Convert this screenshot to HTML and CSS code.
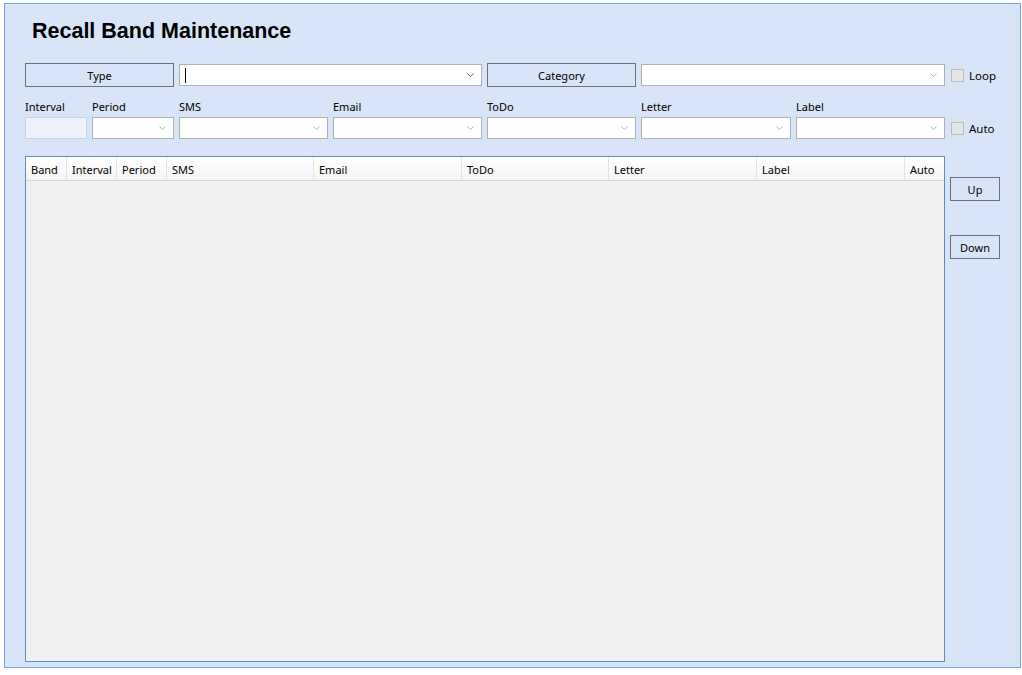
FILE: index.html
```html
<!DOCTYPE html>
<html lang="en">
<head>
    <meta charset="UTF-8">
    <title>Recall Band Maintenance</title>
    <link rel="stylesheet" href="styles.css">
</head>
<body>
    <div class="window">
        <h1 class="title">Recall Band Maintenance</h1>

        <div class="form-grid">
            <button class="btn span-2">Type</button>
            <div class="combo span-2 active">
                <span class="caret"></span>
                <svg class="chev" width="7" height="5" viewBox="0 0 7 5"><polyline points="0.5,0.5 3.5,3.5 6.5,0.5" fill="none" stroke="currentColor"/></svg>
            </div>
            <button class="btn">Category</button>
            <div class="combo span-2">
                <svg class="chev" width="7" height="5" viewBox="0 0 7 5"><polyline points="0.5,0.5 3.5,3.5 6.5,0.5" fill="none" stroke="currentColor"/></svg>
            </div>
            <label class="check"><span class="box"></span>Loop</label>

            <div class="field">
                <span class="lbl">Interval</span>
                <div class="textbox"></div>
            </div>
            <div class="field">
                <span class="lbl">Period</span>
                <div class="combo"><svg class="chev" width="7" height="5" viewBox="0 0 7 5"><polyline points="0.5,0.5 3.5,3.5 6.5,0.5" fill="none" stroke="currentColor"/></svg></div>
            </div>
            <div class="field">
                <span class="lbl">SMS</span>
                <div class="combo"><svg class="chev" width="7" height="5" viewBox="0 0 7 5"><polyline points="0.5,0.5 3.5,3.5 6.5,0.5" fill="none" stroke="currentColor"/></svg></div>
            </div>
            <div class="field">
                <span class="lbl">Email</span>
                <div class="combo"><svg class="chev" width="7" height="5" viewBox="0 0 7 5"><polyline points="0.5,0.5 3.5,3.5 6.5,0.5" fill="none" stroke="currentColor"/></svg></div>
            </div>
            <div class="field">
                <span class="lbl">ToDo</span>
                <div class="combo"><svg class="chev" width="7" height="5" viewBox="0 0 7 5"><polyline points="0.5,0.5 3.5,3.5 6.5,0.5" fill="none" stroke="currentColor"/></svg></div>
            </div>
            <div class="field">
                <span class="lbl">Letter</span>
                <div class="combo"><svg class="chev" width="7" height="5" viewBox="0 0 7 5"><polyline points="0.5,0.5 3.5,3.5 6.5,0.5" fill="none" stroke="currentColor"/></svg></div>
            </div>
            <div class="field">
                <span class="lbl">Label</span>
                <div class="combo"><svg class="chev" width="7" height="5" viewBox="0 0 7 5"><polyline points="0.5,0.5 3.5,3.5 6.5,0.5" fill="none" stroke="currentColor"/></svg></div>
            </div>
            <label class="check check-bottom"><span class="box"></span>Auto</label>
        </div>

        <div class="main">
            <div class="grid-view">
                <div class="grid-header">
                    <div class="col" style="width:41px">Band</div>
                    <div class="col" style="width:50px">Interval</div>
                    <div class="col" style="width:50px">Period</div>
                    <div class="col" style="width:147px">SMS</div>
                    <div class="col" style="width:148px">Email</div>
                    <div class="col" style="width:147px">ToDo</div>
                    <div class="col" style="width:148px">Letter</div>
                    <div class="col" style="width:148px">Label</div>
                    <div class="col last">Auto</div>
                </div>
                <div class="grid-body"></div>
            </div>
            <div class="side">
                <button class="btn small">Up</button>
                <button class="btn small down">Down</button>
            </div>
        </div>
    </div>
</body>
</html>
```

FILE: styles.css
```css
body {
    margin: 0;
    background-color: #ffffff;
    font-family: "Noto Sans", "Liberation Sans", sans-serif;
    font-size: 11px;
    color: #000;
}
.window {
    box-sizing: border-box;
    width: 1017px;
    height: 665px;
    margin: 3px 0 0 4px;
    padding: 15px 0 5px 20px;
    background-color: #d8e4f7;
    border: 1px solid #7aa3e2;
    display: flex;
    flex-direction: column;
}
.title {
    margin: 0 0 0 7px;
    font-family: "Liberation Sans", Arial, sans-serif;
    font-size: 21.5px;
    font-weight: bold;
    line-height: 25px;
    height: 25px;
}
.form-grid {
    display: grid;
    grid-template-columns: 62px 82px 149px 149px 149px 150px 149px auto;
    grid-template-rows: 24px auto;
    column-gap: 5px;
    row-gap: 12px;
    margin-top: 19px;
}
.span-2 { grid-column: span 2; }
.btn {
    box-sizing: border-box;
    height: 24px;
    padding: 0;
    background-color: #d8e4f7;
    border: 1px solid #707070;
    font-family: inherit;
    font-size: 11px;
    color: #000;
}
.combo {
    position: relative;
    box-sizing: border-box;
    height: 22px;
    align-self: center;
    background-color: #fff;
    border: 1px solid #b0b0b0;
    color: #b5b5b5;
}
.field .combo { align-self: stretch; }
.combo.active { color: #606060; }
.combo .chev {
    position: absolute;
    right: 7px;
    top: 8px;
}
.caret {
    position: absolute;
    left: 5px;
    top: 3px;
    height: 15px;
    border-left: 1px solid #000;
}
.check {
    display: flex;
    align-items: center;
    margin-left: 1px;
    gap: 5px;
    font-size: 11.5px;
}
.check-bottom {
    align-self: end;
    height: 21px;
}
.box {
    box-sizing: border-box;
    width: 13px;
    height: 13px;
    background-color: #e6e6e6;
    border: 1px solid #bcbcbc;
}
.field {
    display: flex;
    flex-direction: column;
}
.lbl {
    line-height: 16px;
    margin-bottom: 2px;
    font-size: 11px;
}
.textbox {
    box-sizing: border-box;
    height: 22px;
    background-color: #edf2fb;
    border: 1px solid #c9d5e8;
}
.main {
    display: flex;
    flex: 1;
    margin-top: 17px;
    min-height: 0;
}
.grid-view {
    box-sizing: border-box;
    width: 920px;
    border: 1px solid #6689bb;
    background-color: #f0f0f0;
    display: flex;
    flex-direction: column;
}
.grid-header {
    display: flex;
    height: 23px;
    background: linear-gradient(#ffffff, #f4f4f4);
    border-bottom: 1px solid #d5d5d5;
}
.col {
    box-sizing: border-box;
    padding-left: 5px;
    line-height: 25px;
    font-size: 11px;
    border-right: 1px solid #e3e3e3;
    white-space: nowrap;
}
.col.last {
    flex: 1;
    border-right: none;
}
.side {
    display: flex;
    flex-direction: column;
    margin-left: 5px;
    padding-top: 21px;
    gap: 34px;
}
.btn.small {
    width: 50px;
}
```
